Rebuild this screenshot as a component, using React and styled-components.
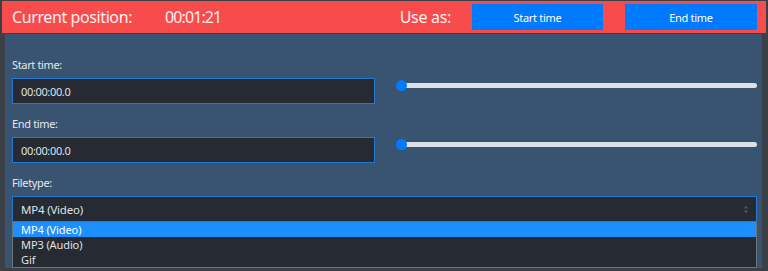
import React from "react";
import styled, { createGlobalStyle } from "styled-components";

const Global = createGlobalStyle`
  html, body { margin: 0; padding: 0; background: #3b4047; }
  body { font-family: "Noto Sans", "Open Sans", sans-serif; overflow: hidden; }
  #root { width: 768px; height: 271px; }
`;

const Shell = styled.div`
  width: 768px;
  height: 271px;
  box-sizing: border-box;
  padding: 1px 2px 0 2px;
  background: #3b4047;
`;

const Header = styled.div`
  height: 32px;
  background: #f74b4c;
  display: flex;
  align-items: center;
  padding: 0 9px 0 10px;
  color: #fbf1f1;
  font-size: 16px;
`;

const HeadLabel = styled.span`
  width: 153px;
  letter-spacing: -0.4px;
`;

const HeadValue = styled.span`
  flex: 1;
  letter-spacing: -0.9px;
`;

const UseAs = styled.span`
  margin-right: 21px;
  letter-spacing: -0.3px;
`;

const HeadButton = styled.button`
  width: ${p => p.$w}px;
  height: 26px;
  margin-left: ${p => p.$ml || 0}px;
  border: none;
  background: #007bff;
  color: #fff;
  font-family: inherit;
  font-size: 11px;
  letter-spacing: -0.3px;
  padding: 0;
  cursor: pointer;
`;

const Panel = styled.div`
  margin: 1px 4px 0 3px;
  height: 234px;
  box-sizing: border-box;
  background: #385471;
  padding: 23px 5px 0 7px;
  position: relative;
`;

const Row = styled.div`
  display: grid;
  grid-template-columns: 363px 1fr;
  column-gap: 21px;
  margin-bottom: 12px;
`;

const Field = styled.div`
  display: flex;
  flex-direction: column;
`;

const Label = styled.label`
  font-size: 11px;
  letter-spacing: -0.35px;
  color: #e3e7ec;
  line-height: 16px;
  margin-bottom: 5px;
`;

const Input = styled.div`
  height: 26px;
  box-sizing: border-box;
  border: 1px solid #2379d0;
  background: #252a33;
  color: #dde2e7;
  font-size: 11px;
  letter-spacing: -0.35px;
  display: flex;
  align-items: center;
  padding-left: 8px;
`;

const SliderCell = styled.div`
  display: flex;
  flex-direction: column;
  justify-content: flex-end;
  padding-bottom: 13px;
`;

const Slider = styled.div`
  display: flex;
  align-items: center;
  height: 11px;
`;

const Thumb = styled.div`
  width: 11px;
  height: 11px;
  border-radius: 50%;
  background: #007bff;
  position: relative;
  z-index: 1;
  flex: none;
`;

const Track = styled.div`
  flex: 1;
  height: 5px;
  margin-left: -6px;
  border-radius: 3px;
  background: #dde0e5;
`;

const SelectWrap = styled.div`
  position: relative;
  display: flex;
  flex-direction: column;
`;

const Select = styled.div`
  height: 26px;
  box-sizing: border-box;
  border: 1px solid #2379d0;
  background: #252a33;
  color: #dde2e7;
  font-size: 11.5px;
  letter-spacing: -0.2px;
  display: flex;
  align-items: center;
  justify-content: space-between;
  padding: 0 7px 0 8px;
`;

const List = styled.ul`
  position: absolute;
  top: 26px;
  left: 0;
  right: 0;
  margin: 0;
  padding: 0;
  list-style: none;
  background: #252a33;
  border: 1px solid #6f7378;
  border-top: none;
`;

const Option = styled.li`
  height: 15px;
  line-height: 15px;
  font-size: 11px;
  letter-spacing: -0.1px;
  padding-left: 8px;
  color: ${p => (p.$active ? "#ffffff" : "#dde2e7")};
  background: ${p => (p.$active ? "#1e8fff" : "transparent")};
`;

function SelectArrows() {
  return (
    <svg width="6" height="9" viewBox="0 0 6 9">
      <path d="M3 0.5 L5.5 3.5 L0.5 3.5 Z" fill="#4a5159" />
      <path d="M3 8.5 L5.5 5.5 L0.5 5.5 Z" fill="#4a5159" />
    </svg>
  );
}

function TimeRow({ label }) {
  return (
    <Row>
      <Field>
        <Label>{label}</Label>
        <Input>00:00:00.0</Input>
      </Field>
      <SliderCell>
        <Slider>
          <Thumb />
          <Track />
        </Slider>
      </SliderCell>
    </Row>
  );
}

export default function App() {
  return (
    <>
      <Global />
      <Shell>
        <Header>
          <HeadLabel>Current position:</HeadLabel>
          <HeadValue>00:01:21</HeadValue>
          <UseAs>Use as:</UseAs>
          <HeadButton $w={131}>Start time</HeadButton>
          <HeadButton $w={132} $ml={22}>End time</HeadButton>
        </Header>
        <Panel>
          <TimeRow label="Start time:" />
          <TimeRow label="End time:" />
          <Field>
            <Label>Filetype:</Label>
            <SelectWrap>
              <Select>
                <span>MP4 (Video)</span>
                <SelectArrows />
              </Select>
              <List>
                <Option $active>MP4 (Video)</Option>
                <Option>MP3 (Audio)</Option>
                <Option>Gif</Option>
              </List>
            </SelectWrap>
          </Field>
        </Panel>
      </Shell>
    </>
  );
}
